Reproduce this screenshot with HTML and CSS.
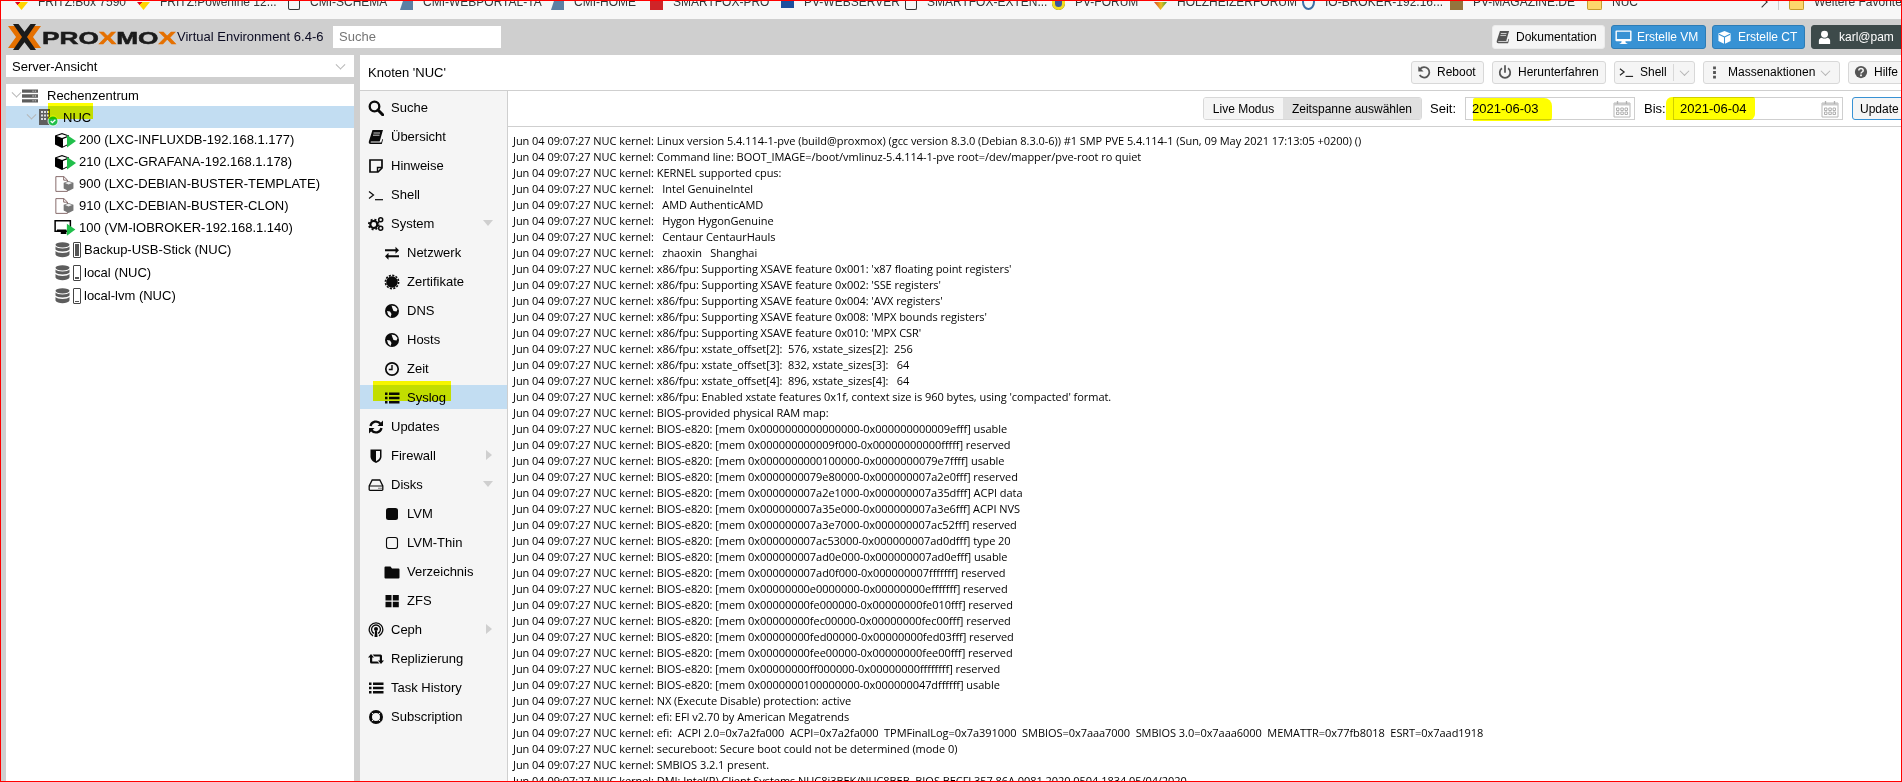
FILE: index.html
```html
<!DOCTYPE html>
<html lang="de">
<head>
<meta charset="utf-8">
<title>NUC - Proxmox Virtual Environment</title>
<link rel="stylesheet" href="styles.css">
</head>
<body>
<svg class="sprite" xmlns="http://www.w3.org/2000/svg">
  <symbol id="i-search" viewBox="0 0 16 16"><circle cx="6.5" cy="6.5" r="4.8" fill="none" stroke="currentColor" stroke-width="2.3"/><path d="M10 10l4.7 4.7" stroke="currentColor" stroke-width="3" stroke-linecap="round"/></symbol>
  <symbol id="i-book" viewBox="0 0 16 16"><path d="M4.5 1H15l-.4 1.2-2.9 10.3H3.2c-.8 0-1 .9-.2 1h10.300l1-3.500.7.500-1.200 4.500H2.600C1 15 .5 13.600.9 12.200z" fill="currentColor"/><path d="M5.500 4h6.500M5 6.200h6.500" stroke="#fff" stroke-width=".8"/></symbol>
  <symbol id="i-note" viewBox="0 0 16 16"><path d="M2 2h12v8l-4 4H2z" fill="none" stroke="currentColor" stroke-width="1.700"/><path d="M9.500 14v-4.500H14" fill="none" stroke="currentColor" stroke-width="1.400"/></symbol>
  <symbol id="i-term" viewBox="0 0 16 16"><path d="M1 4.500L5.500 8 1 11.500" fill="none" stroke="currentColor" stroke-width="1.200"/><path d="M7 12.700h8" stroke="currentColor" stroke-width="1.200"/></symbol>
  <symbol id="i-cogs" viewBox="0 0 16 16"><circle cx="5.800" cy="8.500" r="3.500" fill="none" stroke="currentColor" stroke-width="2.200"/><circle cx="5.800" cy="8.500" r="5" fill="none" stroke="currentColor" stroke-width="1.700" stroke-dasharray="2 1.930"/><circle cx="12.700" cy="3.700" r="2" fill="none" stroke="currentColor" stroke-width="1.500"/><circle cx="12.700" cy="12.300" r="2" fill="none" stroke="currentColor" stroke-width="1.500"/></symbol>
  <symbol id="i-exchange" viewBox="0 0 16 16"><path d="M1 4h10.500V1.500L15 5l-3.500 3.500V6H1zM15 10H4.500V7.500L1 11l3.500 3.500V12H15z" fill="currentColor" transform="translate(0 .3)"/></symbol>
  <symbol id="i-cert" viewBox="0 0 16 16"><circle cx="8" cy="8" r="5.800" fill="currentColor"/><circle cx="8" cy="8" r="6.600" fill="none" stroke="currentColor" stroke-width="1.600" stroke-dasharray="2.100 1.360"/></symbol>
  <symbol id="i-globe" viewBox="0 0 16 16"><circle cx="8" cy="8" r="7" fill="currentColor"/><path d="M7.500 2.500l3.500.700 2.500 2.800-1 2.500-3-.500-1-2.500zM3 8l3 .5 1.500 2.500-1 3L4 11.500z" fill="#f5f5f5"/></symbol>
  <symbol id="i-clock" viewBox="0 0 16 16"><circle cx="8" cy="8" r="6.200" fill="none" stroke="currentColor" stroke-width="1.700"/><path d="M8 4v4.500H4.800" fill="none" stroke="currentColor" stroke-width="1.400"/></symbol>
  <symbol id="i-list" viewBox="0 0 16 16"><path d="M1 2.500h2.500v2.500H1zM5 2.500h10.500v2.500H5zM1 6.800h2.500v2.500H1zM5 6.800h10.500v2.500H5zM1 11h2.500v2.500H1zM5 11h10.500v2.500H5z" fill="currentColor"/></symbol>
  <symbol id="i-refresh" viewBox="0 0 16 16"><path d="M2.500 7a5.700 5.700 0 0 1 10-2.300" fill="none" stroke="currentColor" stroke-width="2.300"/><path d="M15 1.500V7H9.500z" fill="currentColor"/><path d="M13.500 9a5.700 5.700 0 0 1-10 2.300" fill="none" stroke="currentColor" stroke-width="2.300"/><path d="M1 14.500V9h5.500z" fill="currentColor"/></symbol>
  <symbol id="i-shield" viewBox="0 0 16 16"><path d="M2.500 1.500h11v7c0 3.500-3 5.500-5.500 6.500-2.500-1-5.500-3-5.500-6.500z" fill="currentColor"/><path d="M8 3h4v5.500c0 2.300-2 3.700-4 4.700z" fill="#f5f5f5"/></symbol>
  <symbol id="i-hdd" viewBox="0 0 16 16"><path d="M4.200 3h7.600l3 6v3.500a.8.8 0 0 1-.8.8H2a.8.8 0 0 1-.8-.8V9z" fill="none" stroke="currentColor" stroke-width="1.300"/><path d="M1.500 9h13M10.500 11.200h1M12.500 11.200h1" stroke="currentColor" stroke-width="1.100"/></symbol>
  <symbol id="i-sq" viewBox="0 0 16 16"><rect x="2" y="2" width="12" height="12" rx="2.500" fill="currentColor"/></symbol>
  <symbol id="i-sqo" viewBox="0 0 16 16"><rect x="2.500" y="2.500" width="11" height="11" rx="2.200" fill="none" stroke="currentColor" stroke-width="1.100"/></symbol>
  <symbol id="i-folder" viewBox="0 0 16 16"><path d="M1.500 2.500h5l1.500 2h6.500a1 1 0 0 1 1 1v8a1 1 0 0 1-1 1h-13a1 1 0 0 1-1-1v-10a1 1 0 0 1 1-1z" fill="currentColor"/></symbol>
  <symbol id="i-th" viewBox="0 0 16 16"><path d="M1.500 2h6v5.500h-6zM8.800 2h6v5.500h-6zM1.500 8.800h6v5.500h-6zM8.800 8.800h6v5.500h-6z" fill="currentColor"/></symbol>
  <symbol id="i-ceph" viewBox="0 0 16 16"><circle cx="8" cy="7" r="2" fill="currentColor"/><path d="M5 13.800a6.800 6.800 0 1 1 6 0M6 11.300a4.400 4.400 0 1 1 4 0" fill="none" stroke="currentColor" stroke-width="1.300"/><path d="M7 9h2l.5 6h-3z" fill="currentColor"/></symbol>
  <symbol id="i-retweet" viewBox="0 0 16 16"><path d="M0 6.500L3 3l3 3.500H4.200V10.500H9.500L11.500 12.500H3.500a1.500 1.500 0 0 1-1.500-1.500V6.500zM16 9.500L13 13l-3-3.500h1.800V5.500H6.500L4.500 3.500h8a1.500 1.500 0 0 1 1.500 1.500v4.500z" fill="currentColor"/></symbol>
  <symbol id="i-ring" viewBox="0 0 16 16"><circle cx="8" cy="8" r="5.500" fill="none" stroke="currentColor" stroke-width="3"/><path d="M3.800 3.800l2.300 2.300M12.200 3.800L9.900 6.100M3.800 12.200l2.300-2.300M12.200 12.200L9.900 9.900" stroke="#f5f5f5" stroke-width="1"/></symbol>
  <symbol id="i-undo" viewBox="0 0 16 16"><path d="M3.500 4.500A6 6 0 1 1 3 11.500" fill="none" stroke="currentColor" stroke-width="2"/><path d="M1.500 1.500v6h6z" fill="currentColor"/></symbol>
  <symbol id="i-power" viewBox="0 0 16 16"><path d="M4.500 3.800a6 6 0 1 0 7 0" fill="none" stroke="currentColor" stroke-width="2"/><path d="M8 1v7" stroke="currentColor" stroke-width="2" stroke-linecap="round"/></symbol>
  <symbol id="i-dots" viewBox="0 0 16 16"><path d="M6.500 1.500h3v3h-3zM6.500 6.500h3v3h-3zM6.500 11.500h3v3h-3z" fill="currentColor"/></symbol>
  <symbol id="i-help" viewBox="0 0 16 16"><circle cx="8" cy="8" r="7" fill="currentColor"/><path d="M5.500 6.200c0-3 5-3 5 0 0 1.800-2.500 1.800-2.500 3.600" fill="none" stroke="#f5f5f5" stroke-width="1.700"/><path d="M7 10.800h2v2H7z" fill="#f5f5f5"/></symbol>
  <symbol id="i-cal" viewBox="0 0 18 18"><path d="M1 3h16v14H1z" fill="#fff" stroke="#b8b8b8"/><path d="M1 3h16v2.500H1z" fill="#c9c9c9"/><path d="M4.500 1v3M13.500 1v3" stroke="#b0b0b0" stroke-width="1.300"/><path d="M3.500 8h2.500v2.500H3.500zM7.800 8h2.500v2.500H7.800zM12 8h2.500v2.500H12zM3.500 12h2.500v2.500H3.500zM7.800 12h2.500v2.500H7.800zM12 12h2.500v2.500H12z" fill="none" stroke="#a8a8a8" stroke-width=".9"/></symbol>
  <symbol id="i-desktop" viewBox="0 0 18 16"><path d="M1.500 1h15a1 1 0 0 1 1 1v9.500a1 1 0 0 1-1 1h-15a1 1 0 0 1-1-1V2a1 1 0 0 1 1-1zM2 2.500v7.500h14V2.500zM7 12.500h4l.5 2H13v1H5v-1h1.500z" fill="currentColor" fill-rule="evenodd"/></symbol>
  <symbol id="i-cube" viewBox="0 0 16 16"><path d="M8 1l6.500 2.800v8L8 15l-6.500-3.200v-8z" fill="currentColor"/><path d="M8 7.500L14 4.500M8 7.500L2 4.500M8 7.500V15" stroke="#3892d4" stroke-width="1.100" fill="none"/></symbol>
  <symbol id="i-user" viewBox="0 0 16 16"><circle cx="8" cy="4.500" r="3.700" fill="currentColor"/><path d="M2 15v-3.500c0-2 1.500-3.200 3-3.300 1.800 1.300 4.200 1.300 6 0 1.500.1 3 1.300 3 3.300V15z" fill="currentColor"/></symbol>
  <symbol id="t-server" viewBox="0 0 17 14"><path d="M0 0h17v3.600H0zM0 5.200h17v3.600H0zM0 10.400h17V14H0z" fill="#5d5d5d"/><path d="M11 1.300h1.500v1H11zM13.500 1.300H15v1h-1.500zM11 6.500h1.500v1H11zM13.500 6.500H15v1h-1.500zM11 11.700h1.500v1H11zM13.500 11.700H15v1h-1.500z" fill="#eee"/></symbol>
  <symbol id="t-node" viewBox="0 0 21 18"><path d="M1 0h11v16H1z" fill="#5f5f5f"/><path d="M3 2h2v2H3zM6 2h2v2H6zM9 2h2v2H9zM3 5.500h2v2H3zM6 5.500h2v2H6zM9 5.500h2v2H9zM3 9h2v2H3zM6 9h2v2H6z" fill="#ddd"/><circle cx="15" cy="12" r="5" fill="#21bf4b" stroke="#fff" stroke-width=".8"/><path d="M12.700 12l1.700 1.700 3-3" fill="none" stroke="#fff" stroke-width="1.300"/></symbol>
  <symbol id="t-ct" viewBox="0 0 22 16"><path d="M8 1l7 2.500v9L8 16 1 12.500v-9z" fill="#000"/><path d="M8 2.200L13.400 4 8 6 2.700 4z" fill="#fff"/><path d="M9 7l5-2v7l-5 2.500z" fill="#fff"/><path d="M13 3l9 6-9 6.500z" fill="#21bf4b"/></symbol>
  <symbol id="t-tpl" viewBox="0 0 22 18"><path d="M.7.700h9l4 3.800v12.800h-13z" fill="#fff" stroke="#7a5a5a"/><path d="M9.500.700v4h4" fill="none" stroke="#7a5a5a"/><path d="M15 5.500l5.500 2v6.500L15 17l-5.500-3V7.500z" fill="#777"/><path d="M15 6.500l4 1.400-4 1.600-4-1.600z" fill="#eee"/></symbol>
  <symbol id="t-vm" viewBox="0 0 23 17"><path d="M1 .8h16.200V12H1z" fill="#fff" stroke="#000" stroke-width="1.600"/><path d="M3 10h10v5H7v-3H3z" fill="#000"/><path d="M13.500 4l9 6-9 6.800z" fill="#21bf4b"/></symbol>
  <symbol id="t-db" viewBox="0 0 15 16"><ellipse cx="7.500" cy="2.800" rx="7" ry="2.600" fill="#5d5d5d"/><path d="M.5 4.500c1.500 2.500 12.500 2.500 14 0v3c-1.500 2.500-12.500 2.500-14 0zM.5 9c1.500 2.500 12.500 2.500 14 0v3.500c-1.500 3.500-12.500 3.500-14 0z" fill="#5d5d5d"/></symbol>
</svg>

<div class="window">
  <div class="bookmarks">
    <span class="bm bm1"><i class="bi fritz"></i>FRITZ!Box 7590</span>
    <span class="bm bm2"><i class="bi fritz"></i>FRITZ!Powerline 12...</span>
    <span class="bm bm3"><i class="bi page"></i>CMI-SCHEMA</span>
    <span class="bm bm4"><i class="bi cmi"></i>CMI-WEBPORTAL-TA</span>
    <span class="bm bm5"><i class="bi cmi"></i>CMI-HOME</span>
    <span class="bm bm6"><i class="bi fox"></i>SMARTFOX-PRO</span>
    <span class="bm bm7"><i class="bi pvw"></i>PV-WEBSERVER</span>
    <span class="bm bm8"><i class="bi page"></i>SMARTFOX-EXTEN...</span>
    <span class="bm bm9"><i class="bi pvf"></i>PV-FORUM</span>
    <span class="bm bm10"><i class="bi holz"></i>HOLZHEIZERFORUM</span>
    <span class="bm bm11"><i class="bi iob"></i>IO-BROKER-192.16...</span>
    <span class="bm bm12"><i class="bi mag"></i>PV-MAGAZINE.DE</span>
    <span class="bm bm13"><i class="bi fold"></i>NUC</span>
    <span class="bm-end"><span class="bm-more"></span><span class="bm-sep"></span><span class="bm"><i class="bi fold"></i>Weitere Favoriten</span></span>
  </div>

  <header class="topbar">
    <svg class="logo" viewBox="0 0 170 26" width="170" height="26" role="img" aria-label="Proxmox">
      <path d="M1 2h8l8.500 11L9 24H1l8-11zM34 2h-8l-8.500 11L26 24h8l-8-11z" fill="#e57000"/>
      <path d="M6 0h5.500l6 7.800L23.500 0H29L20 13l9 13h-5.500l-6-7.800-6 7.800H6l9-13z" fill="#1b1b1b"/>
      <text x="35" y="20" class="logo-text" textLength="134" lengthAdjust="spacingAndGlyphs">PRO<tspan class="logo-x">X</tspan>MO<tspan class="logo-x">X</tspan></text>
    </svg>
    <span class="version">Virtual Environment 6.4-6</span>
    <div class="search">Suche</div>
    <div class="top-actions">
      <span class="btn btn-doc"><svg class="ic"><use href="#i-book"/></svg>Dokumentation</span>
      <span class="btn btn-blue btn-vm"><svg class="ic-l"><use href="#i-desktop"/></svg>Erstelle VM</span>
      <span class="btn btn-blue btn-ct"><svg class="ic-m"><use href="#i-cube"/></svg>Erstelle CT</span>
      <span class="btn btn-dark"><svg class="ic-m"><use href="#i-user"/></svg>karl@pam<span class="chev chev-w"></span></span>
    </div>
  </header>

  <div class="workspace">
    <aside class="left">
      <div class="combo">Server-Ansicht<span class="chev"></span></div>
      <div class="tree">
        <div class="row r0"><span class="chev tchev"></span><svg class="ti server"><use href="#t-server"/></svg>Rechenzentrum</div>
        <div class="row r1 sel"><span class="chev tchev"></span><svg class="ti node"><use href="#t-node"/></svg><span class="nuc">NUC</span><span class="mark mark-nuc"></span></div>
        <div class="row r2"><svg class="ti guest"><use href="#t-ct"/></svg>200 (LXC-INFLUXDB-192.168.1.177)</div>
        <div class="row r2"><svg class="ti guest"><use href="#t-ct"/></svg>210 (LXC-GRAFANA-192.168.1.178)</div>
        <div class="row r2"><svg class="ti guest"><use href="#t-tpl"/></svg>900 (LXC-DEBIAN-BUSTER-TEMPLATE)</div>
        <div class="row r2"><svg class="ti guest"><use href="#t-tpl"/></svg>910 (LXC-DEBIAN-BUSTER-CLON)</div>
        <div class="row r2"><svg class="ti guest"><use href="#t-vm"/></svg>100 (VM-IOBROKER-192.168.1.140)</div>
        <div class="row r3"><svg class="ti db"><use href="#t-db"/></svg><span class="dev"><b class="lv lv-full"></b></span>Backup-USB-Stick (NUC)</div>
        <div class="row r3"><svg class="ti db"><use href="#t-db"/></svg><span class="dev"><b class="lv lv-low"></b></span>local (NUC)</div>
        <div class="row r3"><svg class="ti db"><use href="#t-db"/></svg><span class="dev"><b class="lv lv-min"></b></span>local-lvm (NUC)</div>
      </div>
    </aside>

    <main class="main">
      <div class="head">
        <span class="title">Knoten 'NUC'</span>
        <div class="head-actions">
          <span class="btn b-reboot"><svg class="ic"><use href="#i-undo"/></svg>Reboot</span>
          <span class="btn b-down"><svg class="ic"><use href="#i-power"/></svg>Herunterfahren</span>
          <span class="btn b-shell"><svg class="ic-l ic-k"><use href="#i-term"/></svg>Shell<span class="split"></span><span class="chev"></span></span>
          <span class="btn b-mass"><svg class="ic-m"><use href="#i-dots"/></svg>Massenaktionen<span class="chev"></span></span>
          <span class="btn b-help"><svg class="ic"><use href="#i-help"/></svg>Hilfe</span>
        </div>
      </div>
      <div class="body">
        <nav class="nav">
          <div class="nv"><svg class="ni"><use href="#i-search"/></svg>Suche</div>
          <div class="nv"><svg class="ni"><use href="#i-book"/></svg>Übersicht</div>
          <div class="nv"><svg class="ni"><use href="#i-note"/></svg>Hinweise</div>
          <div class="nv"><svg class="ni"><use href="#i-term"/></svg>Shell</div>
          <div class="nv"><svg class="ni"><use href="#i-cogs"/></svg>System<span class="arr down"></span></div>
          <div class="nv sub"><svg class="ni"><use href="#i-exchange"/></svg>Netzwerk</div>
          <div class="nv sub"><svg class="ni"><use href="#i-cert"/></svg>Zertifikate</div>
          <div class="nv sub"><svg class="ni"><use href="#i-globe"/></svg>DNS</div>
          <div class="nv sub"><svg class="ni"><use href="#i-globe"/></svg>Hosts</div>
          <div class="nv sub"><svg class="ni"><use href="#i-clock"/></svg>Zeit</div>
          <div class="nv sub sel"><svg class="ni"><use href="#i-list"/></svg>Syslog<span class="mark mark-sys"></span></div>
          <div class="nv"><svg class="ni"><use href="#i-refresh"/></svg>Updates</div>
          <div class="nv"><svg class="ni"><use href="#i-shield"/></svg>Firewall<span class="arr right"></span></div>
          <div class="nv"><svg class="ni"><use href="#i-hdd"/></svg>Disks<span class="arr down"></span></div>
          <div class="nv sub"><svg class="ni"><use href="#i-sq"/></svg>LVM</div>
          <div class="nv sub"><svg class="ni"><use href="#i-sqo"/></svg>LVM-Thin</div>
          <div class="nv sub"><svg class="ni"><use href="#i-folder"/></svg>Verzeichnis</div>
          <div class="nv sub"><svg class="ni"><use href="#i-th"/></svg>ZFS</div>
          <div class="nv"><svg class="ni"><use href="#i-ceph"/></svg>Ceph<span class="arr right"></span></div>
          <div class="nv"><svg class="ni"><use href="#i-retweet"/></svg>Replizierung</div>
          <div class="nv"><svg class="ni"><use href="#i-list"/></svg>Task History</div>
          <div class="nv"><svg class="ni"><use href="#i-ring"/></svg>Subscription</div>
        </nav>
        <section class="content">
          <div class="logbar">
            <div class="seg"><span class="seg-btn seg-live">Live Modus</span><span class="seg-btn seg-on">Zeitspanne auswählen</span></div>
            <span class="lbl lbl-from">Seit:</span>
            <div class="date">2021-06-03<svg class="cal"><use href="#i-cal"/></svg><span class="mark mark-from"></span></div>
            <span class="lbl lbl-to">Bis:</span>
            <div class="date">2021-06-04<svg class="cal"><use href="#i-cal"/></svg><span class="mark mark-to"></span></div>
            <span class="update">Update</span>
          </div>
          <div class="log">
<div>Jun 04 09:07:27 NUC kernel: Linux version 5.4.114-1-pve (build@proxmox) (gcc version 8.3.0 (Debian 8.3.0-6)) #1 SMP PVE 5.4.114-1 (Sun, 09 May 2021 17:13:05 +0200) ()</div>
<div>Jun 04 09:07:27 NUC kernel: Command line: BOOT_IMAGE=/boot/vmlinuz-5.4.114-1-pve root=/dev/mapper/pve-root ro quiet</div>
<div>Jun 04 09:07:27 NUC kernel: KERNEL supported cpus:</div>
<div>Jun 04 09:07:27 NUC kernel:   Intel GenuineIntel</div>
<div>Jun 04 09:07:27 NUC kernel:   AMD AuthenticAMD</div>
<div>Jun 04 09:07:27 NUC kernel:   Hygon HygonGenuine</div>
<div>Jun 04 09:07:27 NUC kernel:   Centaur CentaurHauls</div>
<div>Jun 04 09:07:27 NUC kernel:   zhaoxin   Shanghai</div>
<div>Jun 04 09:07:27 NUC kernel: x86/fpu: Supporting XSAVE feature 0x001: 'x87 floating point registers'</div>
<div>Jun 04 09:07:27 NUC kernel: x86/fpu: Supporting XSAVE feature 0x002: 'SSE registers'</div>
<div>Jun 04 09:07:27 NUC kernel: x86/fpu: Supporting XSAVE feature 0x004: 'AVX registers'</div>
<div>Jun 04 09:07:27 NUC kernel: x86/fpu: Supporting XSAVE feature 0x008: 'MPX bounds registers'</div>
<div>Jun 04 09:07:27 NUC kernel: x86/fpu: Supporting XSAVE feature 0x010: 'MPX CSR'</div>
<div>Jun 04 09:07:27 NUC kernel: x86/fpu: xstate_offset[2]:  576, xstate_sizes[2]:  256</div>
<div>Jun 04 09:07:27 NUC kernel: x86/fpu: xstate_offset[3]:  832, xstate_sizes[3]:   64</div>
<div>Jun 04 09:07:27 NUC kernel: x86/fpu: xstate_offset[4]:  896, xstate_sizes[4]:   64</div>
<div>Jun 04 09:07:27 NUC kernel: x86/fpu: Enabled xstate features 0x1f, context size is 960 bytes, using 'compacted' format.</div>
<div>Jun 04 09:07:27 NUC kernel: BIOS-provided physical RAM map:</div>
<div>Jun 04 09:07:27 NUC kernel: BIOS-e820: [mem 0x0000000000000000-0x000000000009efff] usable</div>
<div>Jun 04 09:07:27 NUC kernel: BIOS-e820: [mem 0x000000000009f000-0x00000000000fffff] reserved</div>
<div>Jun 04 09:07:27 NUC kernel: BIOS-e820: [mem 0x0000000000100000-0x0000000079e7ffff] usable</div>
<div>Jun 04 09:07:27 NUC kernel: BIOS-e820: [mem 0x0000000079e80000-0x000000007a2e0fff] reserved</div>
<div>Jun 04 09:07:27 NUC kernel: BIOS-e820: [mem 0x000000007a2e1000-0x000000007a35dfff] ACPI data</div>
<div>Jun 04 09:07:27 NUC kernel: BIOS-e820: [mem 0x000000007a35e000-0x000000007a3e6fff] ACPI NVS</div>
<div>Jun 04 09:07:27 NUC kernel: BIOS-e820: [mem 0x000000007a3e7000-0x000000007ac52fff] reserved</div>
<div>Jun 04 09:07:27 NUC kernel: BIOS-e820: [mem 0x000000007ac53000-0x000000007ad0dfff] type 20</div>
<div>Jun 04 09:07:27 NUC kernel: BIOS-e820: [mem 0x000000007ad0e000-0x000000007ad0efff] usable</div>
<div>Jun 04 09:07:27 NUC kernel: BIOS-e820: [mem 0x000000007ad0f000-0x000000007fffffff] reserved</div>
<div>Jun 04 09:07:27 NUC kernel: BIOS-e820: [mem 0x00000000e0000000-0x00000000efffffff] reserved</div>
<div>Jun 04 09:07:27 NUC kernel: BIOS-e820: [mem 0x00000000fe000000-0x00000000fe010fff] reserved</div>
<div>Jun 04 09:07:27 NUC kernel: BIOS-e820: [mem 0x00000000fec00000-0x00000000fec00fff] reserved</div>
<div>Jun 04 09:07:27 NUC kernel: BIOS-e820: [mem 0x00000000fed00000-0x00000000fed03fff] reserved</div>
<div>Jun 04 09:07:27 NUC kernel: BIOS-e820: [mem 0x00000000fee00000-0x00000000fee00fff] reserved</div>
<div>Jun 04 09:07:27 NUC kernel: BIOS-e820: [mem 0x00000000ff000000-0x00000000ffffffff] reserved</div>
<div>Jun 04 09:07:27 NUC kernel: BIOS-e820: [mem 0x0000000100000000-0x000000047dffffff] usable</div>
<div>Jun 04 09:07:27 NUC kernel: NX (Execute Disable) protection: active</div>
<div>Jun 04 09:07:27 NUC kernel: efi: EFI v2.70 by American Megatrends</div>
<div>Jun 04 09:07:27 NUC kernel: efi:  ACPI 2.0=0x7a2fa000  ACPI=0x7a2fa000  TPMFinalLog=0x7a391000  SMBIOS=0x7aaa7000  SMBIOS 3.0=0x7aaa6000  MEMATTR=0x77fb8018  ESRT=0x7aad1918</div>
<div>Jun 04 09:07:27 NUC kernel: secureboot: Secure boot could not be determined (mode 0)</div>
<div>Jun 04 09:07:27 NUC kernel: SMBIOS 3.2.1 present.</div>
<div>Jun 04 09:07:27 NUC kernel: DMI: Intel(R) Client Systems NUC8i3BEK/NUC8BEB, BIOS BECFL357.86A.0081.2020.0504.1834 05/04/2020</div>
          </div>
        </section>
      </div>
    </main>
  </div>
</div>
</body>
</html>
```

FILE: styles.css
```css
* { box-sizing: border-box; }
html, body { margin: 0; height: 100%; overflow: hidden; }
body { font: 13px/16px "Liberation Sans", Arial, sans-serif; color: #000; }
.sprite { display: none; }

.window {
  width: 1902px; height: 782px;
  border: 1px solid #f00;
  background: #cfcfcf;
  display: flex; flex-direction: column;
  overflow: hidden;
}

/* Browser favourites bar, cut at the top of the capture */
.bookmarks {
  height: 18px; flex: none;
  background: #f7f7f7;
  display: flex; align-items: flex-end;
  padding: 0 0 9px 14px;
  font-size: 12px; line-height: 16px; color: #333;
  white-space: nowrap;
  overflow: hidden;
}
.bm { display: inline-flex; align-items: center; gap: 10px; flex: none; }
.bi { display: inline-block; width: 13px; height: 16px; flex: none; }
.bm1 { width: 122px; }
.bm2 { width: 151px; }
.bm3 { width: 112px; }
.bm4 { width: 151px; }
.bm5 { width: 99px; }
.bm6 { width: 131px; }
.bm7 { width: 124px; }
.bm8 { width: 147px; }
.bm9 { width: 102px; }
.bm10 { width: 148px; }
.bm11 { width: 148px; }
.bm12 { width: 137px; }
.bm13 { width: 171px; }
.bm-end { display: flex; align-items: flex-end; }
.bm-more { width: 8px; height: 8px; border-top: 1px solid #333; border-right: 1px solid #333; margin-bottom: 4px; transform: rotate(45deg); }
.bm-sep { width: 1px; height: 18px; background: #ccc; margin: 0 10px 0 12px; }
.fritz { background: linear-gradient(135deg, #e2001a 0 45%, #ffd400 45%); clip-path: polygon(0 50%, 100% 50%, 50% 100%); }
.page { border: 1.5px solid #333; border-radius: 2px; border-top: 0; width: 12px; }
.cmi { background: #5b7fa3; clip-path: polygon(0 100%, 40% 0, 100% 0, 100% 100%); }
.fox { background: #cf2428; }
.pvw { background: #1d4f9e; height: 12px; }
.pvf { background: #f1dd1f; border-radius: 0 0 8px 8px; box-shadow: inset 0 0 0 3px #f1dd1f, inset 0 0 0 8px #3a56a0; }
.holz { background: linear-gradient(90deg, #d8402a, #ecc020 55%, #3d9a3a); clip-path: polygon(0 50%, 100% 50%, 50% 100%); }
.iob { border: 2px solid #3b6ea5; border-radius: 50%; }
.mag { background: #94743d; }
.fold { background: #fdd66b; border: 1.5px solid #c69c2c; border-top: 0; border-radius: 0 0 2px 2px; width: 15px; }

/* Proxmox top bar */
.topbar {
  height: 36px; flex: none;
  display: flex; align-items: center;
}
.logo { margin-left: 6px; flex: none; }
.logo-text { font: 700 17px "Liberation Sans", Arial, sans-serif; fill: #1b1b1b; stroke: #1b1b1b; stroke-width: .5px; }
.logo-x { fill: #e57000; stroke: #e57000; }
.version { width: 156px; white-space: nowrap; color: #0b0b22; }
.search {
  width: 168px; height: 22px;
  background: #fff; color: #757575;
  padding: 3px 6px;
}
.top-actions { margin-left: auto; display: flex; gap: 6px; margin-right: -31px; }
.ic { width: 14px; height: 14px; color: #555; flex: none; }
.ic-m { width: 15px; height: 15px; color: #fff; flex: none; }
.ic-l { width: 17px; height: 16px; color: #fff; flex: none; }
.ic-k { color: #222; width: 15px; }
.b-mass .ic-m { color: #555; }

.btn {
  display: flex; align-items: center; gap: 6px;
  height: 24px; padding: 0 6px 0 5px;
  background: #f5f5f5;
  border: 1px solid #d8d8d8; border-radius: 3px;
  font-size: 12px;
  white-space: nowrap; flex: none;
}
.btn-doc { width: 113px; border-color: #ececec; padding-left: 3px; }
.btn-blue { background: #3892d4; border-color: #2d7cb5; color: #fff; }
.btn-vm { width: 95px; padding-left: 3px; gap: 5px; }
.btn-ct { width: 93px; padding-left: 4px; }
.btn-dark { width: 121px; background: #3d4a4a; border-color: #3d4a4a; color: #fff; gap: 7px; }
.chev-w { border-color: #999; margin-left: 4px; }

.workspace { flex: 1; min-height: 0; display: flex; gap: 6px; padding-left: 5px; }

/* Resource tree */
.left { width: 348px; flex: none; display: flex; flex-direction: column; gap: 7px; }
.combo {
  height: 22px; flex: none;
  background: #fff;
  padding: 4px 6px 2px;
  display: flex; justify-content: space-between; align-items: center;
}
.chev {
  display: inline-block; flex: none;
  width: 7px; height: 7px;
  border-right: 1px solid #b5b5b5; border-bottom: 1px solid #b5b5b5;
  transform: rotate(45deg) translate(-2px, -2px);
}
.combo .chev { margin-right: 4px; }
.tree { flex: 1; background: #fff; }
.row { height: 22px; padding-top: 1px; display: flex; align-items: center; position: relative; white-space: nowrap; }
.row.sel { background: #c2ddf2; }
.r0 { padding-left: 7px; }
.r1 { padding-left: 22px; }
.r2 { padding-left: 48px; }
.r3 { padding-left: 49px; height: 23px; }
.tchev { margin: 0 2px 0 0; }
.ti { flex: none; }
.server { width: 16px; height: 14px; margin: 0 9px 0 0; }
.node { width: 21px; height: 18px; margin: 0 4px 0 1px; }
.guest { width: 22px; height: 16px; margin-right: 3px; }
.db { width: 15px; height: 16px; margin-right: 3px; }
.dev { width: 8px; height: 16px; border: 1px solid #444; border-radius: 1px; margin-right: 3px; display: flex; align-items: flex-end; padding: 1px; flex: none; }
.lv { display: block; width: 100%; background: #555; }
.lv-full { height: 100%; }
.lv-low { height: 2px; }
.lv-min { height: 1px; }

/* Highlighter strokes painted on the screenshot */
.mark { position: absolute; background: #ff0; mix-blend-mode: multiply; }
.mark-nuc { left: 42px; top: -3px; width: 45px; height: 16px; }
.mark-sys { left: 13px; top: -4px; width: 78px; height: 20px; }
.mark-from { left: 7px; top: 0; width: 79px; height: 23px; border-radius: 2px 8px 4px 0; }
.mark-to { left: -8px; top: -1px; width: 89px; height: 23px; border-radius: 6px 2px 6px 0; }

/* Main panel */
.main { flex: 1; min-width: 0; background: #fff; display: flex; flex-direction: column; }
.head {
  height: 36px; flex: none;
  border-bottom: 1px solid #cfcfcf;
  display: flex; align-items: center;
  padding: 0 0 1px 8px;
}
.title { white-space: nowrap; padding-top: 2px; }
.head-actions { margin-left: auto; display: flex; gap: 8px; margin-right: -31px; }
.head-actions .btn { height: 23px; }
.b-reboot { width: 73px; }
.b-down { width: 114px; }
.b-shell { width: 81px; padding-left: 4px; }
.split { width: 1px; height: 17px; background: #d8d8d8; }
.b-shell .chev, .b-mass .chev { transform: rotate(45deg) translate(-1px, -1px); margin-left: 1px; }
.b-mass { width: 137px; gap: 6px; padding-left: 3px; }
.b-help { width: 84px; }

.body { flex: 1; min-height: 0; display: flex; }
.nav {
  width: 148px; flex: none;
  background: #f5f5f5;
  border-right: 1px solid #cfcfcf;
  padding-top: 4px;
  display: flex; flex-direction: column; gap: 5px;
}
.nv { height: 24px; padding-top: 1px; flex: none; display: flex; align-items: center; position: relative; padding-left: 8px; white-space: nowrap; }
.nv.sub { padding-left: 24px; }
.nv.sel { background: #c2ddf2; }
.ni { width: 16px; height: 16px; flex: none; margin-right: 7px; color: #0a0a0a; }
.arr { position: absolute; width: 0; height: 0; border-style: solid; border-color: transparent; }
.arr.down { border-width: 6px 5px 0; border-top-color: #cfcfcf; right: 14px; top: 9px; }
.arr.right { border-width: 5px 0 5px 6px; border-left-color: #cfcfcf; right: 15px; top: 7px; }

.content { flex: 1; min-width: 0; display: flex; flex-direction: column; }
.logbar {
  height: 36px; flex: none;
  border-bottom: 1px solid #cfcfcf;
  display: flex; align-items: center;
  padding: 0 0 1px 695px;
}
.seg { display: flex; flex: none; height: 23px; border: 1px solid #d8d8d8; border-radius: 3px; overflow: hidden; font-size: 12px; }
.seg-btn { display: flex; align-items: center; justify-content: center; background: #f5f5f5; white-space: nowrap; padding-top: 1px; }
.seg-live { width: 79px; }
.seg-on { width: 138px; background: #e0e0e0; }
.lbl { flex: none; white-space: nowrap; padding-top: 2px; }
.lbl-from { margin-left: 8px; width: 35px; }
.lbl-to { margin-left: 9px; width: 29px; }
.date {
  width: 170px; height: 23px; flex: none;
  border: 1px solid #cfcfcf;
  padding: 3px 6px 1px;
  position: relative;
  display: flex; align-items: center; justify-content: space-between;
}
.cal { width: 18px; height: 18px; margin-right: -3px; }
.update {
  margin-left: 9px; flex: none;
  width: 80px; height: 23px;
  border: 1px solid #3892d4; border-radius: 3px;
  background: #f5f5f5;
  font-size: 12px;
  padding: 3px 7px 1px;
}

.log {
  flex: 1; min-height: 0; overflow: hidden;
  padding: 6px 0 0 5px;
  font: 11px/16px "Open Sans", "Noto Sans", sans-serif;
  letter-spacing: -.05px;
  color: #000;
}
.log div { height: 16px; white-space: pre; }
```
